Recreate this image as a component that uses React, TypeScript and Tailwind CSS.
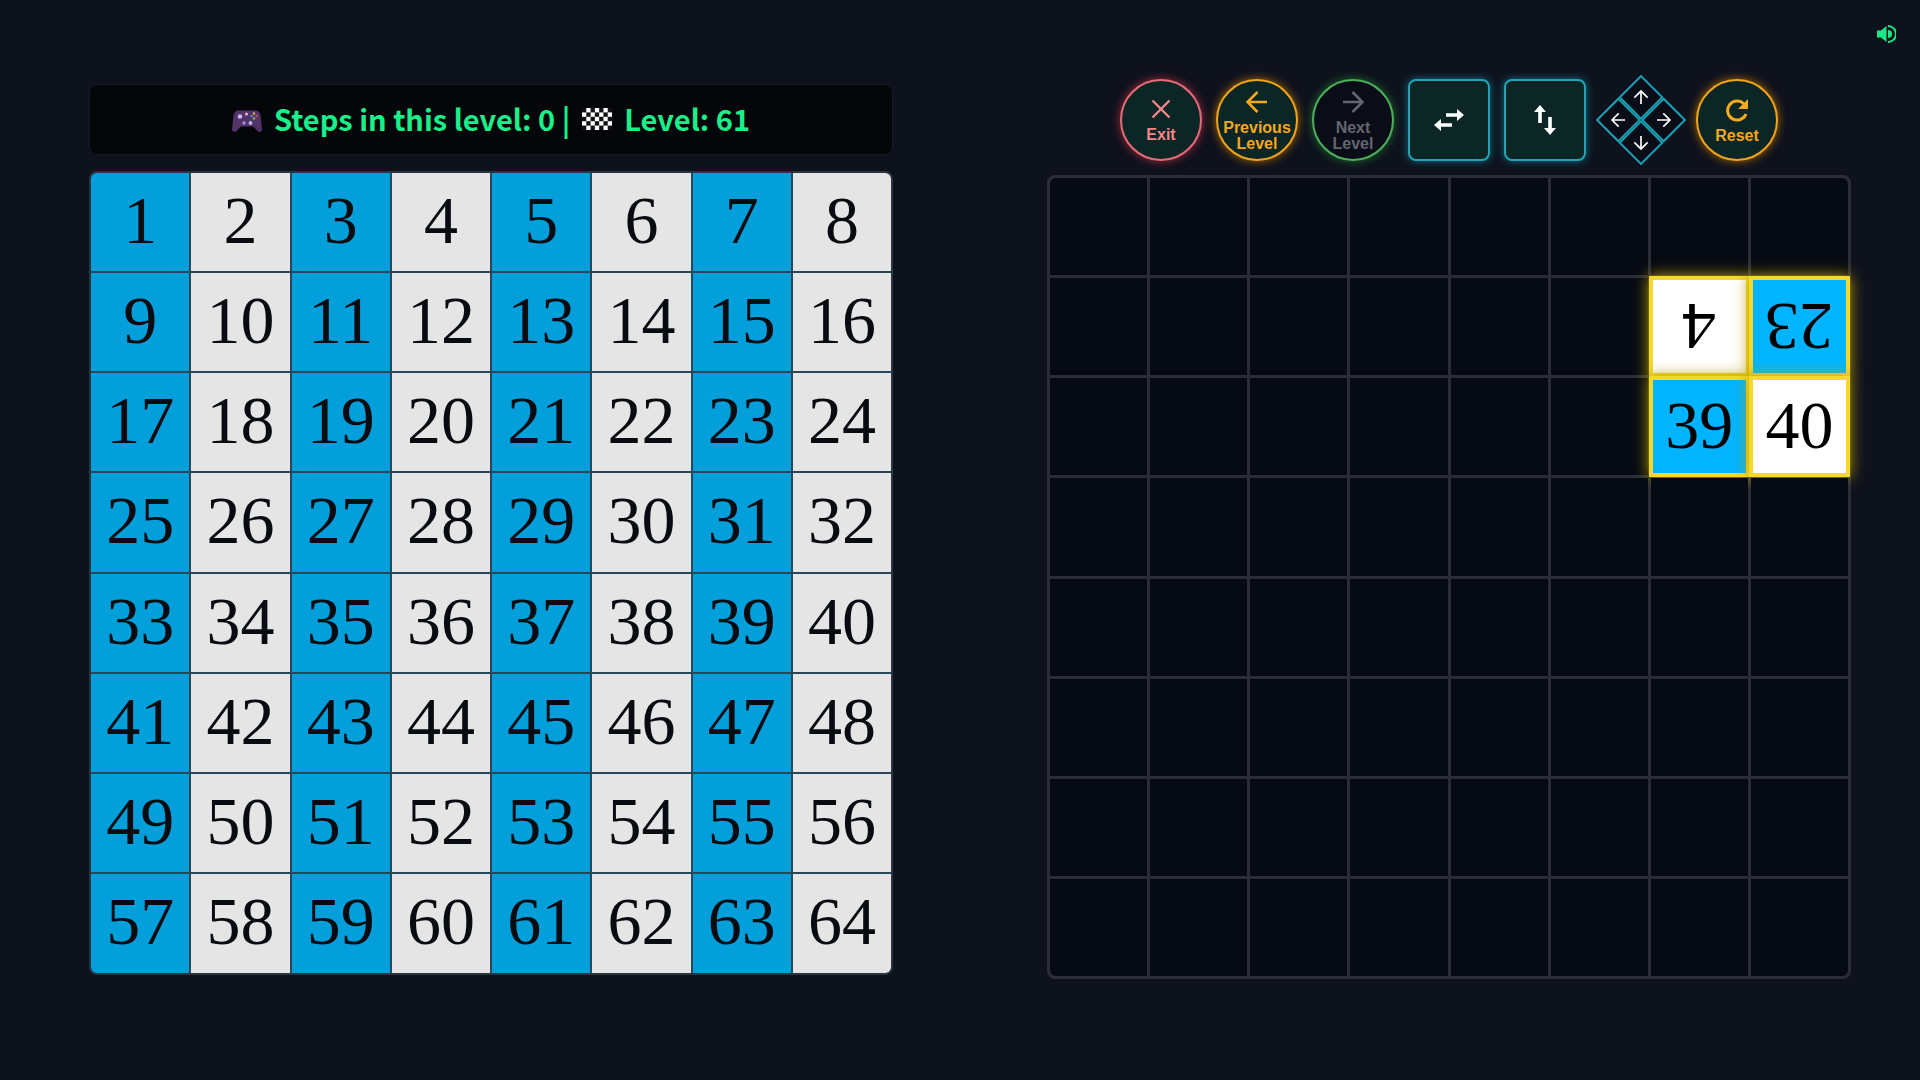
import React, { useState } from "react";

const SIZE = 8;
const cells = Array.from({ length: SIZE * SIZE }, (_, i) => i + 1);

type Piece = { value: number; blue: boolean; flipped: boolean };

// board cell index -> piece lying on it
const pieces: Record<number, Piece> = {
  15: { value: 4, blue: false, flipped: true },
  16: { value: 23, blue: true, flipped: true },
  23: { value: 39, blue: true, flipped: false },
  24: { value: 40, blue: false, flipped: false },
};

const roundButton =
  "flex size-[82px] flex-col items-center justify-center rounded-full border-2 pt-[2px] font-bold text-[16px] leading-4 cursor-pointer";
const squareButton =
  "flex size-[82px] items-center justify-center rounded-lg border-2 border-[#1fa3b5] bg-[#0b2624] text-white shadow-[0_0_8px_#0e6f80] cursor-pointer";
const padButton =
  "flex size-8 items-center justify-center border-2 border-[#1a9fb0] bg-[#0a0d18] text-white cursor-pointer";

const Arrow = ({ className }: { className: string }) => (
  <svg viewBox="0 0 24 24" className={className} fill="none" stroke="currentColor" strokeWidth="2.5">
    <path d="M22 12H3M12.500 2L2.500 12L12.500 22" />
  </svg>
);

const Gamepad = () => (
  <svg viewBox="0 0 30 24" className="mt-1 h-6 w-[30px]">
    <path d="M6 1.5h18c2.500 0 4 2 4.500 5L30 20c.2 3-3 4-5 1.500L21 17.500H9L5 21.500C3 24 -.2 23 0 20L1.500 6.500C2 3.500 3.500 1.500 6 1.500z" fill="#513465" />
    <circle cx="8" cy="7.500" r="2.300" fill="#c9b5f5" />
    <circle cx="14.500" cy="5" r="1.500" fill="#e9b6dc" />
    <circle cx="12" cy="14" r="1.700" fill="#9d8af0" />
    <circle cx="18.500" cy="14" r="2" fill="#b7aef8" />
    <circle cx="22" cy="4.500" r="1.200" fill="#e0b23c" />
    <circle cx="19.800" cy="7" r="1.200" fill="#5a8de0" />
    <circle cx="24.500" cy="7" r="1.200" fill="#d8425c" />
    <circle cx="22" cy="9.500" r="1.200" fill="#74b860" />
  </svg>
);

const Checkers = () => (
  <svg viewBox="0 0 7 5" className="h-[22px] w-[30px]" preserveAspectRatio="none">
    <rect width="7" height="5" fill="#111" />
    {Array.from({ length: 35 }, (_, i) => i)
      .filter((i) => i % 2 === 1)
      .map((i) => (
        <rect key={i} x={i % 7} y={Math.floor(i / 7)} width="1" height="1" fill="#fff" />
      ))}
  </svg>
);

const Swap = ({ className }: { className?: string }) => (
  <svg viewBox="0 0 30 22" className={`h-[22px] w-[30px] ${className ?? ""}`} fill="currentColor">
    <path d="M12 4.200h11V0l7 6-7 6V7.800H12zM18 14.200H7V10L0 16l7 6v-4.200h11z" />
  </svg>
);

const App: React.FC = () => {
  const [muted, setMuted] = useState(false);

  return (
    <div className="relative flex min-h-screen items-center gap-[154px] bg-[#0e121d] pb-[22px] pl-[89px] pr-[69px] font-['Liberation_Sans',sans-serif]">
      <button
        aria-label="Toggle sound"
        onClick={() => setMuted(!muted)}
        className="absolute right-6 top-6 text-[#1de982] cursor-pointer"
      >
        <svg viewBox="0 0 20 20" className="size-5" fill="currentColor">
          <path d="M1 6.500h4L10.500 2v16L5 13.500H1z" />
          {!muted && (
            <>
              <path d="M12 6a4 4 0 0 1 0 8z" />
              <path d="M12 2a8 8 0 0 1 0 16" fill="none" stroke="currentColor" strokeWidth="2" />
            </>
          )}
        </svg>
      </button>

      <section className="flex flex-1 flex-col gap-4">
        <h1 className="flex h-[71px] items-center justify-center gap-3 rounded-lg border border-[#171a23] bg-[#040609] font-['Noto_Sans_CJK_SC',sans-serif] text-[29px] font-bold text-[#1af08a]">
          <Gamepad />
          <span>Steps in this level: 0 |</span>
          <Checkers />
          <span>Level: 61</span>
        </h1>
        <div className="grid aspect-square grid-cols-8 grid-rows-8 gap-[2px] overflow-hidden rounded-lg border-2 border-[#2a3440] bg-[#28485a]">
          {cells.map((n) => (
            <div
              key={n}
              className={`flex items-center justify-center pb-1 font-['Liberation_Serif',serif] text-[68px] leading-none text-[#080c10] ${
                n % 2 ? "bg-[#029fda]" : "bg-[#e5e5e5]"
              }`}
            >
              {n}
            </div>
          ))}
        </div>
      </section>

      <section className="flex flex-1 flex-col gap-[14px]">
        <div className="flex justify-center gap-[14px]">
          <button className={`${roundButton} gap-2 border-[#e56b78] bg-[#0b2624] text-[#f4868c] shadow-[0_0_10px_#a32a3c]`}>
            <svg viewBox="0 0 20 20" className="size-5" fill="none" stroke="currentColor" strokeWidth="2.400">
              <path d="M1.500 1.500l17 17M18.500 1.500l-17 17" />
            </svg>
            Exit
          </button>
          <button className={`${roundButton} gap-[6px] border-[#f0a41c] bg-[#0b2624] text-[#f5a91c] shadow-[0_0_10px_#b06a00]`}>
            <Arrow className="size-6" />
            <span>Previous Level</span>
          </button>
          <button disabled className={`${roundButton} gap-[6px] border-[#4caf5a] bg-[#0a0d18] text-[#64666f] shadow-[0_0_10px_#1d6b2c]`}>
            <Arrow className="size-6 rotate-180" />
            <span>Next Level</span>
          </button>
          <button aria-label="Flip horizontally" className={squareButton}>
            <Swap />
          </button>
          <button aria-label="Flip vertically" className={squareButton}>
            <svg viewBox="0 0 22 30" className="h-[30px] w-[22px]" fill="currentColor">
              <path d="M4.200 18V7H0l6-7 6 7H7.800v11zM14.200 12v11H10l6 7 6-7h-4.200V12z" />
            </svg>
          </button>
          <div className="flex size-[82px] items-center justify-center">
            <div className="grid shrink-0 rotate-45 grid-cols-2 bg-[#1a9fb0]">
              <button aria-label="Move up" className={padButton}>
                <Arrow className="size-4 rotate-45" />
              </button>
              <button aria-label="Move right" className={padButton}>
                <Arrow className="size-4 rotate-135" />
              </button>
              <button aria-label="Move left" className={padButton}>
                <Arrow className="size-4 -rotate-45" />
              </button>
              <button aria-label="Move down" className={padButton}>
                <Arrow className="size-4 -rotate-135" />
              </button>
            </div>
          </div>
          <button className={`${roundButton} gap-[6px] border-[#f0a41c] bg-[#0b2624] text-[#f5a91c] shadow-[0_0_10px_#b06a00]`}>
            <svg viewBox="0 0 24 24" className="size-6" fill="none" stroke="currentColor" strokeWidth="3">
              <path d="M21 16A9.500 9.500 0 1 1 19 6" />
              <path d="M23 1v10H13z" fill="currentColor" stroke="none" />
            </svg>
            Reset
          </button>
        </div>

        <div className="grid aspect-square grid-cols-8 grid-rows-8 gap-[3px] rounded-lg border-[3px] border-[#2a2d37] bg-[#2a2d37]">
          {cells.map((n) => {
            const piece = pieces[n];
            if (!piece) {
              return <div key={n} className="bg-[#060a13] nth-1:rounded-tl-md nth-8:rounded-tr-md nth-57:rounded-bl-md nth-64:rounded-br-md" />;
            }
            return (
              <div
                key={n}
                className={`-m-[2px] flex items-center justify-center border-4 border-[#f5d929] font-['Liberation_Serif',serif] text-[68px] leading-none text-black shadow-[0_0_14px_#b99d00] ${
                  piece.blue ? "bg-[#00b4ff]" : "bg-white"
                }`}
              >
                <span className={piece.flipped ? "rotate-180" : "pb-1"}>{piece.value}</span>
              </div>
            );
          })}
        </div>
      </section>
    </div>
  );
};

export default App;
